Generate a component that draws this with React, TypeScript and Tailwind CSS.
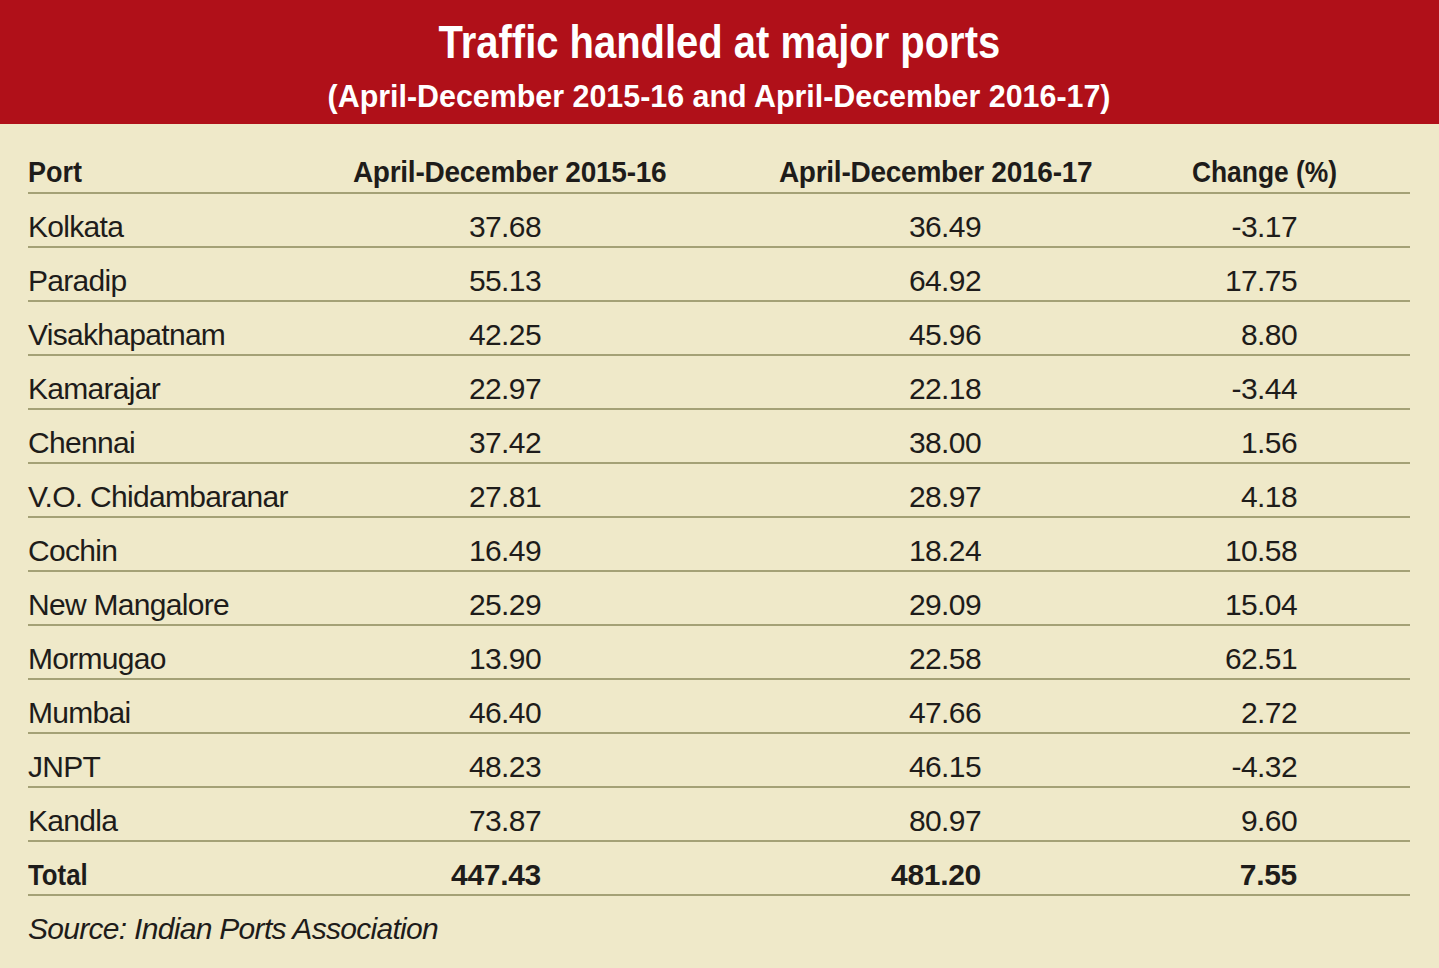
import React from 'react'

// 항구별 물동량 (백만 톤)
const ROWS: [string, string, string, string][] = [
  ['Kolkata', '37.68', '36.49', '-3.17'],
  ['Paradip', '55.13', '64.92', '17.75'],
  ['Visakhapatnam', '42.25', '45.96', '8.80'],
  ['Kamarajar', '22.97', '22.18', '-3.44'],
  ['Chennai', '37.42', '38.00', '1.56'],
  ['V.O. Chidambaranar', '27.81', '28.97', '4.18'],
  ['Cochin', '16.49', '18.24', '10.58'],
  ['New Mangalore', '25.29', '29.09', '15.04'],
  ['Mormugao', '13.90', '22.58', '62.51'],
  ['Mumbai', '46.40', '47.66', '2.72'],
  ['JNPT', '48.23', '46.15', '-4.32'],
  ['Kandla', '73.87', '80.97', '9.60'],
]

function Row({ cells, bold }: { cells: [string, string, string, string]; bold?: boolean }) {
  const num = bold ? 'font-bold tracking-[-0.3px]' : 'tracking-[-0.6px]'
  return (
    <div className="flex h-[54px] pt-[18px] border-b-2 border-[#a4a176] text-[30px] leading-[30px]">
      <div className="w-[300px]">
        {bold ? (
          <span className="inline-block font-bold scale-x-[0.86] origin-left">{cells[0]}</span>
        ) : (
          <span className="tracking-[-0.7px]">{cells[0]}</span>
        )}
      </div>
      <div className={`w-[213px] text-right ${num}`}>{cells[1]}</div>
      <div className={`w-[440px] text-right ${num}`}>{cells[2]}</div>
      <div className={`w-[316px] text-right ${num}`}>{cells[3]}</div>
    </div>
  )
}

export default function App() {
  return (
    <div className="w-[1439px] h-[968px] bg-[#efe9c9] text-[#1e1c1a] font-['Liberation_Sans',Arial,sans-serif] overflow-hidden">
      {/* 제목 띠 */}
      <div className="h-[124px] bg-[#b01019] text-white text-center pt-[18px]">
        <div className="text-[47px] leading-[47px] font-bold">
          <span className="inline-block scale-x-[0.85]">Traffic handled at major ports</span>
        </div>
        <div className="mt-[15px] text-[32px] leading-[32px] font-bold">
          <span className="inline-block scale-x-[0.95]">(April-December 2015-16 and April-December 2016-17)</span>
        </div>
      </div>

      <div className="pl-[28px] pr-[29px]">
        {/* 표 머리 */}
        <div className="flex h-[70px] pt-[33px] border-b-2 border-[#a4a176] text-[30px] leading-[30px] font-bold">
          <div className="w-[300px]">
            <span className="inline-block scale-x-[0.9] origin-left">Port</span>
          </div>
          <div className="w-[364px] text-center">
            <span className="inline-block scale-x-[0.935] tracking-[-0.3px]">April-December 2015-16</span>
          </div>
          <div className="w-[488px] text-center">
            <span className="inline-block scale-x-[0.935] tracking-[-0.3px]">April-December 2016-17</span>
          </div>
          <div className="w-[168px] text-center">
            <span className="inline-block scale-x-[0.88]">Change (%)</span>
          </div>
        </div>

        {ROWS.map((r) => (
          <Row key={r[0]} cells={r} />
        ))}
        <Row cells={['Total', '447.43', '481.20', '7.55']} bold />

        <div className="pt-[18px] text-[30px] leading-[30px] italic tracking-[-0.7px]">
          Source: Indian Ports Association
        </div>
      </div>
    </div>
  )
}
